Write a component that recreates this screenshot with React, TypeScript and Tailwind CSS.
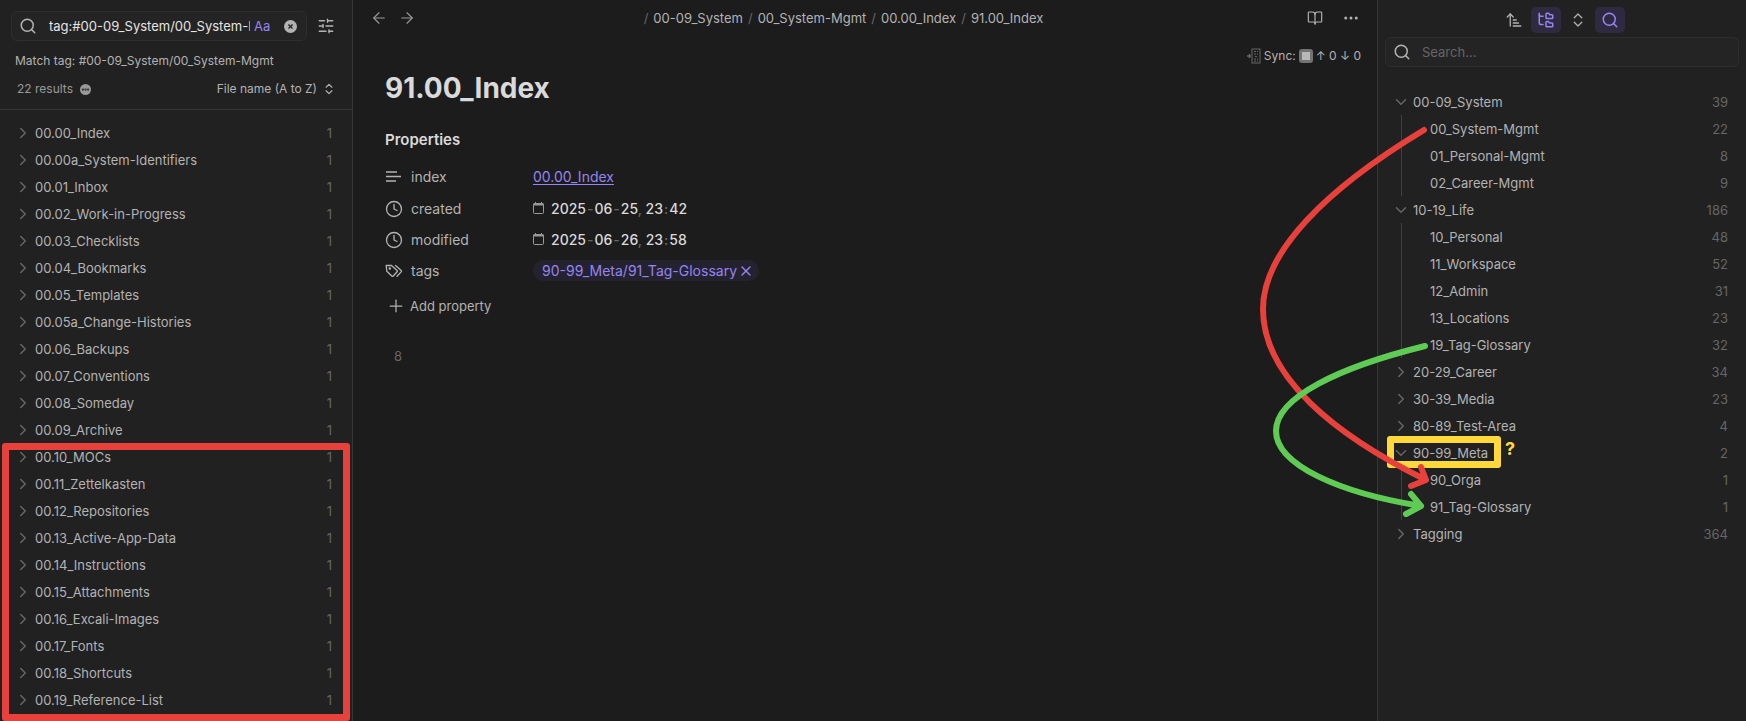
import { useState } from 'react';
import {
  ArrowLeft,
  ArrowRight,
  ArrowUpNarrowWide,
  BookOpen,
  ChevronDown,
  ChevronRight,
  ChevronsUpDown,
  Clock,
  Ellipsis,
  FolderTree,
  Plus,
  Search,
  SlidersHorizontal,
  Tags,
  X,
} from 'lucide-react';

interface TagNode {
  name: string;
  count: number;
  children?: TagNode[];
}

const results = [
  '00.00_Index',
  '00.00a_System-Identifiers',
  '00.01_Inbox',
  '00.02_Work-in-Progress',
  '00.03_Checklists',
  '00.04_Bookmarks',
  '00.05_Templates',
  '00.05a_Change-Histories',
  '00.06_Backups',
  '00.07_Conventions',
  '00.08_Someday',
  '00.09_Archive',
  '00.10_MOCs',
  '00.11_Zettelkasten',
  '00.12_Repositories',
  '00.13_Active-App-Data',
  '00.14_Instructions',
  '00.15_Attachments',
  '00.16_Excali-Images',
  '00.17_Fonts',
  '00.18_Shortcuts',
  '00.19_Reference-List',
];

const tagTree: TagNode[] = [
  {
    name: '00-09_System',
    count: 39,
    children: [
      { name: '00_System-Mgmt', count: 22 },
      { name: '01_Personal-Mgmt', count: 8 },
      { name: '02_Career-Mgmt', count: 9 },
    ],
  },
  {
    name: '10-19_Life',
    count: 186,
    children: [
      { name: '10_Personal', count: 48 },
      { name: '11_Workspace', count: 52 },
      { name: '12_Admin', count: 31 },
      { name: '13_Locations', count: 23 },
      { name: '19_Tag-Glossary', count: 32 },
    ],
  },
  { name: '20-29_Career', count: 34 },
  { name: '30-39_Media', count: 23 },
  { name: '80-89_Test-Area', count: 4 },
  {
    name: '90-99_Meta',
    count: 2,
    children: [
      { name: '90_Orga', count: 1 },
      { name: '91_Tag-Glossary', count: 1 },
    ],
  },
  { name: 'Tagging', count: 364 },
];

const breadcrumbs = ['00-09_System', '00_System-Mgmt', '00.00_Index', '91.00_Index'];

function SearchPanel() {
  const [query, setQuery] = useState('tag:#00-09_System/00_System-Mgmt');

  return (
    <aside className="relative w-[353px] shrink-0 border-r border-[#363636] bg-[#212121]">
      <div className="flex items-center pt-[11px] pl-[11px]">
        <div className="flex h-[30px] w-[296px] items-center rounded-md border border-[#2e2e2e] bg-[#242424] pr-[9px] pl-[7px]">
          <Search className="size-[18px] shrink-0 text-[#b3b3b3]" strokeWidth={2} />
          <input
            type="text"
            aria-label="Search files"
            value={query}
            onChange={(e) => setQuery(e.target.value)}
            className="ml-3 w-[201px] bg-transparent text-[#e4e4e4] outline-none"
          />
          <button aria-label="Match case" className="ml-1 text-[#9585f0]">
            Aa
          </button>
          <button aria-label="Clear search" className="ml-auto rounded-full bg-[#b3b3b3] p-[3px] text-[#242424]">
            <X className="size-[7px]" strokeWidth={4} />
          </button>
        </div>
        <button aria-label="Search settings" className="ml-2.5 text-[#b3b3b3]">
          <SlidersHorizontal className="size-[18px]" strokeWidth={1.75} />
        </button>
      </div>

      <p className="mt-[10px] pl-[15px] text-xs leading-5 text-[#b3b3b3]">
        Match tag: #00-09_System/00_System-Mgmt
      </p>
      <div className="mt-2 flex h-5 items-center pr-4 pl-[17px] text-xs text-[#b3b3b3]">
        <span className="text-[#999999]">22 results</span>
        <button aria-label="Copy results" className="ml-[7px] rounded-full bg-[#999999] p-px text-[#212121]">
          <Ellipsis className="size-[9px]" strokeWidth={4} />
        </button>
        <button className="ml-auto flex items-center gap-[5px]">
          File name (A to Z)
          <ChevronsUpDown className="size-[14px]" strokeWidth={2} />
        </button>
      </div>

      <ul className="mt-[10px] border-t border-[#363636] pt-[9px]">
        {results.map((name) => (
          <li key={name}>
            <button className="flex h-[27px] w-full items-center pr-5 pl-[14px] text-[#b3b3b3]">
              <ChevronRight className="size-[18px] text-[#666666]" strokeWidth={2} />
              <span className="ml-[3px]">{name}</span>
              <span className="ml-auto text-[#666666]">1</span>
            </button>
          </li>
        ))}
      </ul>

      <div className="pointer-events-none absolute top-[443px] right-[2px] bottom-0 left-[2px] rounded-[3px] border-7 border-[#e8413c]" />
    </aside>
  );
}

function DateValue({ parts }: { parts: string[] }) {
  const [year, month, day, hour, minute] = parts;
  return (
    <button className="flex items-center gap-1.5 text-[#dadada]">
      <svg viewBox="0 0 12 13" className="h-[13px] w-3 text-[#999999]" fill="none" stroke="currentColor">
        <rect x="0.5" y="1.500" width="10" height="10" rx="1" />
        <path d="M0.5 2.500h10" strokeWidth="2" />
        <path d="M2.500 0v2M8.500 0v2" />
      </svg>
      <span className="font-medium">
        {year}
        <span className="px-px text-[#666666]">-</span>
        {month}
        <span className="px-px text-[#666666]">-</span>
        {day}
        <span className="text-[#666666]">, </span>
        {hour}
        <span className="px-px text-[#666666]">:</span>
        {minute}
      </span>
    </button>
  );
}

function NoteView() {
  return (
    <main className="min-w-0 flex-1 bg-[#1c1c1c]">
      <header className="flex h-9 items-center px-[17px] text-[#b3b3b3]">
        <div className="flex w-16 gap-[10px]">
          <button aria-label="Back">
            <ArrowLeft className="size-[18px] text-[#999999]" strokeWidth={1.5} />
          </button>
          <button aria-label="Forward">
            <ArrowRight className="size-[18px] text-[#999999]" strokeWidth={1.5} />
          </button>
        </div>
        <nav className="flex flex-1 justify-center">
          {breadcrumbs.map((crumb) => (
            <span key={crumb} className="flex">
              <span className="px-[5px] text-[#666666]">/</span>
              <a href="#">{crumb}</a>
            </span>
          ))}
        </nav>
        <div className="flex w-28 items-center justify-end gap-[19px]">
          <button aria-label="Reading view">
            <BookOpen className="size-4" strokeWidth={1.75} />
          </button>
          <button aria-label="More options">
            <Ellipsis className="size-[18px]" strokeWidth={2} />
          </button>
        </div>
      </header>

      <div className="flex h-10 items-center justify-end gap-[3px] pr-4 text-xs text-[#b3b3b3]">
        <svg viewBox="0 0 14 16" className="h-4 w-[14px] text-[#666666]" fill="none" stroke="currentColor">
          <rect x="5" y="1" width="8" height="14" />
          <path d="M0 8h4M2.5 6v4" strokeWidth="1.6" />
          <path d="M7 3.500h4M7 6h4M8 8.500h3M7 11h4M7 13h4" strokeDasharray="2 1" />
        </svg>
        <span>Sync:</span>
        <span className="flex size-[14px] items-center justify-center rounded-[3px] bg-[#737373]">
          <span className="size-2 bg-[#b8b8b8]" />
        </span>
        <span>↑ 0 ↓ 0</span>
      </div>

      <section className="px-8">
        <h1 className="text-[28px] leading-6 font-bold text-[#dadada]">91.00_Index</h1>
        <h2 className="mt-7 text-[15px] leading-6 font-semibold text-[#dadada]">Properties</h2>

        <dl className="mt-[9px] grid grid-cols-[148px_1fr] text-[14px] text-[#b3b3b3]">
          <dt className="flex h-8 items-center gap-2.5">
            <svg viewBox="0 0 16 14" className="h-[14px] w-4" fill="none" stroke="currentColor" strokeWidth="1.4">
              <path d="M1 2h11M1 6.500h15M1 11h10" />
            </svg>
            index
          </dt>
          <dd className="flex items-center">
            <a href="#" className="text-[#9585f0] underline underline-offset-2">
              00.00_Index
            </a>
          </dd>
          <dt className="flex h-[31px] items-center gap-2">
            <Clock className="size-[18px]" strokeWidth={1.75} />
            created
          </dt>
          <dd className="flex items-center">
            <DateValue parts={['2025', '06', '25', '23', '42']} />
          </dd>
          <dt className="flex h-[31px] items-center gap-2">
            <Clock className="size-[18px]" strokeWidth={1.75} />
            modified
          </dt>
          <dd className="flex items-center">
            <DateValue parts={['2025', '06', '26', '23', '58']} />
          </dd>
          <dt className="flex h-[31px] items-center gap-2">
            {/* two overlapping labels, wider than they are tall */}
            <svg
              viewBox="0 0 18 14"
              className="h-[14px] w-[18px]"
              fill="none"
              stroke="currentColor"
              strokeWidth="1.3"
              strokeLinecap="round"
              strokeLinejoin="round"
            >
              <path d="M1.200 1.500h5.300l5.600 4.900a1 1 0 0 1 0 1.400L8.200 12a1 1 0 0 1-1.400 0L1.800 7.200z" />
              <path d="M10.500 1.500l5.700 5a1 1 0 0 1 0 1.400L12 12.300" />
              <circle cx="4.800" cy="4.600" r="0.600" fill="currentColor" />
            </svg>
            tags
          </dt>
          <dd className="flex items-center">
            <span className="flex h-[21px] items-center gap-px rounded-full bg-[#25222f] pr-[5px] pl-[9px] text-[#9585f0]">
              <a href="#">90-99_Meta/91_Tag-Glossary</a>
              <button aria-label="Remove tag">
                <X className="size-4" strokeWidth={2} />
              </button>
            </span>
          </dd>
        </dl>

        <button className="mt-2 flex items-center gap-1 pl-px leading-6 text-[#b3b3b3]">
          <Plus className="size-5" strokeWidth={1.5} />
          Add property
        </button>
        <p className="mt-7 pl-[9px] text-[#666666]">8</p>
      </section>
    </main>
  );
}

function TagRow({ tag }: { tag: TagNode }) {
  const Icon = tag.children ? ChevronDown : ChevronRight;
  return (
    <li>
      <button className="flex h-[27px] w-full items-center pr-[18px] pl-[14px] text-[#b3b3b3]">
        <Icon className="size-[18px] text-[#666666]" strokeWidth={2} />
        <span className="relative ml-[3px]">
          {tag.name}
          {tag.name === '90-99_Meta' && (
            <>
              <span className="pointer-events-none absolute -top-[7px] -right-[13px] -bottom-[5px] -left-[26px] rounded-[3px] border-7 border-[#ffd93b]" />
              <span className="absolute -top-2 -right-[27px] text-lg font-bold text-[#ffd93b]">?</span>
            </>
          )}
        </span>
        <span className="ml-auto text-[#666666]">{tag.count}</span>
      </button>
      {tag.children && (
        <ul className="ml-[23px] border-l border-[#404040]">
          {tag.children.map((child) => (
            <li key={child.name}>
              <button className="flex h-[27px] w-full items-center pr-[18px] pl-7 text-[#b3b3b3]">
                {child.name}
                <span className="ml-auto text-[#666666]">{child.count}</span>
              </button>
            </li>
          ))}
        </ul>
      )}
    </li>
  );
}

// Hand-drawn arrows linking related tags
function TagArrows() {
  return (
    <svg
      viewBox="0 0 180 420"
      className="pointer-events-none absolute top-[115px] -left-[128px] h-[420px] w-[180px]"
      fill="none"
      strokeWidth="6"
      strokeLinecap="round"
      strokeLinejoin="round"
    >
      <path stroke="#e8413c" d="M174 15C76 74 13 137 13 194C13 262 85 320 176 365M171 352L176 365L161 371" />
      <path stroke="#5fcb55" d="M175 231C90 252 26 282 26 316C26 350 90 378 171 391M161 379L171 391L156 399" />
    </svg>
  );
}

function TagPanel() {
  return (
    <aside className="relative w-[369px] shrink-0 border-l border-[#363636] bg-[#212121]">
      <div className="flex items-center justify-center gap-[2px] pt-[7px] text-[#b3b3b3]">
        <button aria-label="Change sort order" className="flex h-[26px] w-[30px] items-center justify-center">
          <ArrowUpNarrowWide className="size-[18px]" strokeWidth={1.75} />
        </button>
        <button aria-label="Show nested tags" className="flex h-[26px] w-[30px] items-center justify-center rounded-[5px] bg-[#2f2a40] text-[#9585f0]">
          <FolderTree className="size-[18px]" strokeWidth={2} />
        </button>
        <button aria-label="Collapse all" className="flex h-[26px] w-[30px] items-center justify-center">
          <ChevronsUpDown className="size-[18px]" strokeWidth={1.75} />
        </button>
        <button aria-label="Show search" className="flex h-[26px] w-[30px] items-center justify-center rounded-[5px] bg-[#2f2a40] text-[#9585f0]">
          <Search className="size-[18px]" strokeWidth={2} />
        </button>
      </div>

      <div className="mx-[7px] mt-1 flex h-[30px] items-center rounded-md border border-[#2e2e2e] bg-[#242424] px-[7px] text-[#b3b3b3]">
        <Search className="size-[18px]" strokeWidth={2} />
        <input
          type="text"
          aria-label="Search tags"
          placeholder="Search..."
          className="ml-[11px] flex-1 bg-transparent outline-none placeholder:text-[#666666]"
        />
      </div>

      <ul className="mt-[21px]">
        {tagTree.map((tag) => (
          <TagRow key={tag.name} tag={tag} />
        ))}
      </ul>
      <TagArrows />
    </aside>
  );
}

export default function App() {
  return (
    <div className="flex min-h-screen bg-[#1c1c1c] font-['Inter',sans-serif] text-[13px] leading-5">
      <SearchPanel />
      <NoteView />
      <TagPanel />
    </div>
  );
}
